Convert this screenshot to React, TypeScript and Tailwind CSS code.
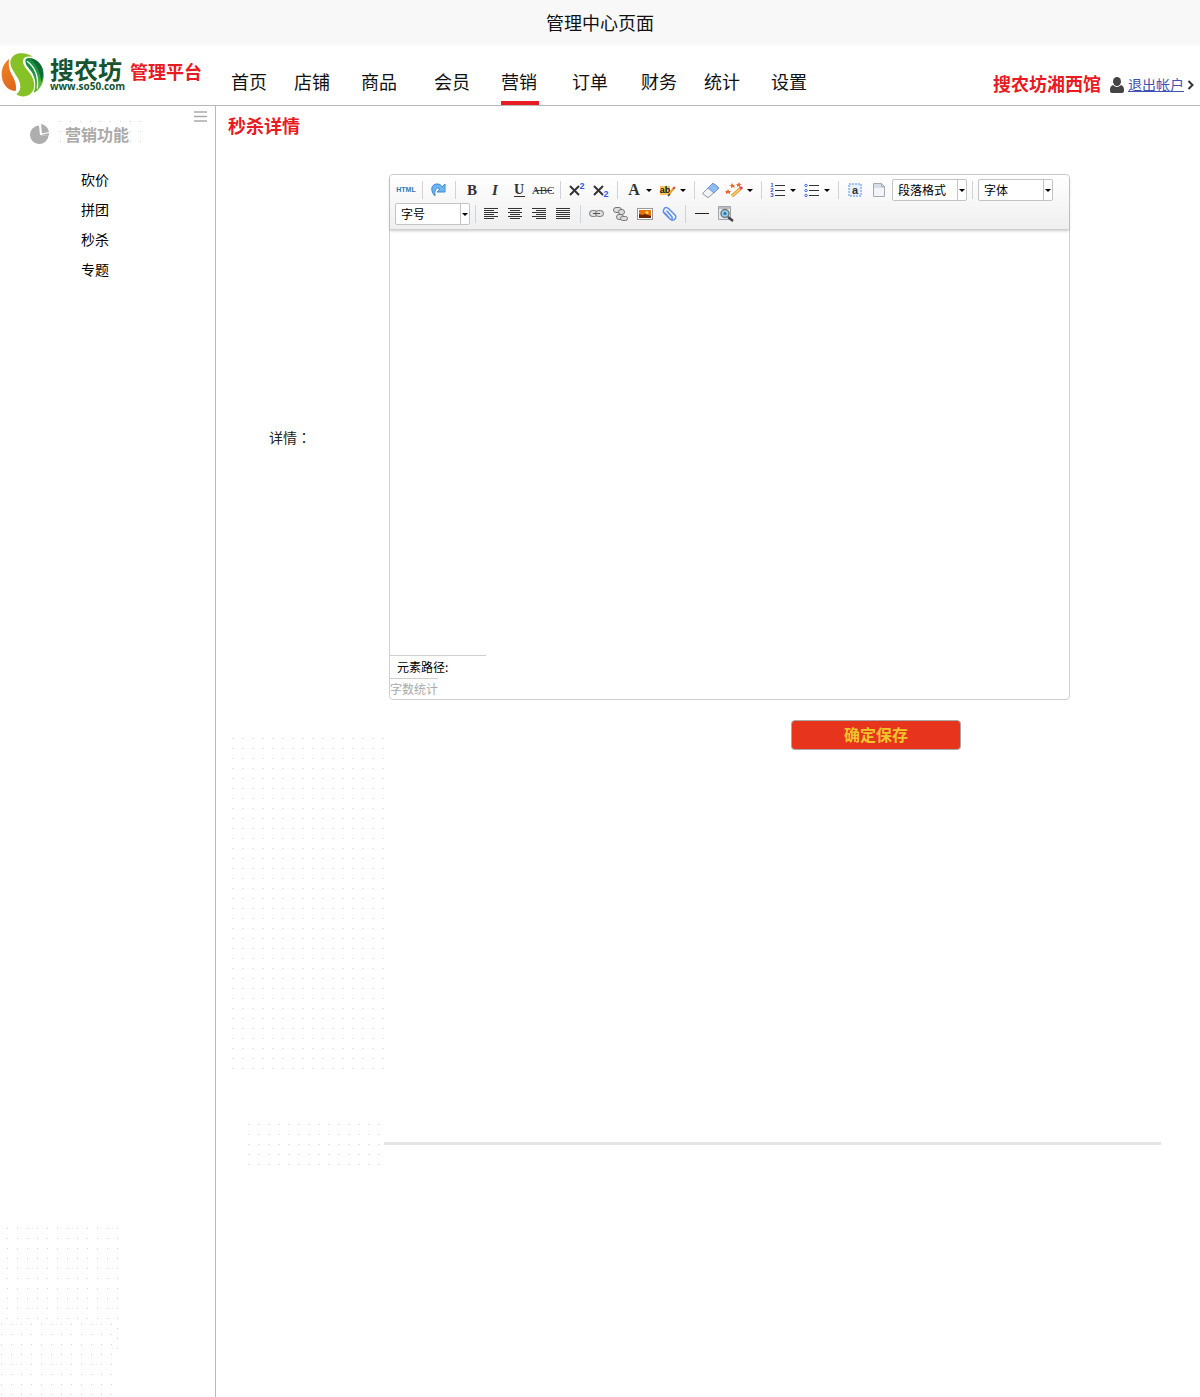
import type { ReactNode } from "react";

const navItems = [
  { label: "首页", gap: "" },
  { label: "店铺", gap: "ml-[27px]" },
  { label: "商品", gap: "ml-[31px]" },
  { label: "会员", gap: "ml-[37px]" },
  { label: "营销", gap: "ml-[31px]", active: true },
  { label: "订单", gap: "ml-[33px]" },
  { label: "财务", gap: "ml-[33px]" },
  { label: "统计", gap: "ml-[27px]" },
  { label: "设置", gap: "ml-[31px]" },
];

const sideItems = ["砍价", "拼团", "秒杀", "专题"];

function Emblem() {
  return (
    <svg viewBox="0 0 132 132" className="h-11 w-11 shrink-0" aria-hidden="true">
      <defs>
        <linearGradient id="leafOrange" x1="0" y1="0" x2="0.4" y2="1">
          <stop offset="0" stopColor="#ee8428" />
          <stop offset="1" stopColor="#e26a1a" />
        </linearGradient>
        <linearGradient id="leafDark" x1="0" y1="0" x2="0.6" y2="1">
          <stop offset="0" stopColor="#13873a" />
          <stop offset="0.6" stopColor="#1d9a40" />
          <stop offset="1" stopColor="#6dba2e" />
        </linearGradient>
      </defs>
      <path fill="url(#leafOrange)" d="M25 18C8 30-1 50 3 74c4 25 22 39 41 40 3-14 0-28-9-44C26 54 20 38 25 18Z" />
      <path fill="#86c226" d="M54 1C32 5 23 24 31 42c8 21 28 36 27 61-1 10-6 17-12 21 10 8 29 9 41 0 17-13 15-36 5-55C82 51 64 38 66 22c2-9 12-14 30-10C84 2 69-1 54 1Z" />
      <path fill="url(#leafDark)" d="M74 18c12-7 31 0 43 14 15 18 15 50 1 70-7 10-14 16-20 17 8-20 6-40-4-59C84 44 70 36 74 18Z" />
      <path fill="none" stroke="#fff" strokeWidth="4" d="M78 25c22 16 36 38 31 82" />
      <path fill="#0f6a35" d="M88 16c14 2 28 12 34 26 6 14 5 34-1 45-3-26-12-50-33-71Z" />
    </svg>
  );
}

function Tool({ label, caret, children }: { label: string; caret?: boolean; children: ReactNode }) {
  return (
    <button type="button" aria-label={label} title={label} className="flex h-6 items-center">
      <svg viewBox="0 0 24 24" className="h-6 w-6" fill="none" aria-hidden="true">
        {children}
      </svg>
      {caret && (
        <svg viewBox="0 0 10 24" className="h-6 w-[10px]" aria-hidden="true">
          <path d="M0 11h6L3 14Z" fill="#000" />
        </svg>
      )}
    </button>
  );
}

function Sep() {
  return <span className="mx-1 h-[18px] w-px self-center bg-[#d0d3d8]" />;
}

function Picker({ label, options }: { label: string; options: string[] }) {
  return (
    <label className="relative mx-px my-px block h-[22px] w-[75px]">
      <span className="sr-only">{label}</span>
      <select className="block h-[22px] w-full appearance-none rounded-[2px] border border-[#c4c4c4] bg-white pr-3 pl-[5px] text-xs leading-5 text-black outline-none">
        {[label, ...options].map((o) => (
          <option key={o}>{o}</option>
        ))}
      </select>
      <svg viewBox="0 0 10 22" className="pointer-events-none absolute right-0 top-0 h-[22px] w-[10px]" aria-hidden="true">
        <path d="M.5 1v20" stroke="#c4c4c4" />
        <path d="M2 10h6L5 13Z" fill="#000" />
      </svg>
    </label>
  );
}

const serif = "'Liberation Serif', serif";
const sans = "'Liberation Sans', sans-serif";

function Glyph({ children, x = 12, y = 17, size = 15, family = serif, weight = 700, fill = "#333", italic = false }: {
  children: string; x?: number; y?: number; size?: number; family?: string; weight?: number; fill?: string; italic?: boolean;
}) {
  return (
    <text x={x} y={y} textAnchor="middle" fontFamily={family} fontSize={size} fontWeight={weight} fill={fill} fontStyle={italic ? "italic" : "normal"}>
      {children}
    </text>
  );
}

function Toolbar() {
  return (
    <div className="flex flex-wrap rounded-t-[4px] border-b border-[#cfcfcf] bg-linear-to-b from-white to-[#efefef] px-1 pt-[3px] pb-[3px] shadow-[0_1px_3px_rgba(0,0,0,0.22)]">
      <Tool label="源代码">
        <Glyph family={sans} size={7} x={12} y={14} fill="#2f77b0">HTML</Glyph>
      </Tool>
      <Sep />
      <Tool label="重做">
        <path d="M8 18C3 13 4 6 10 6c3 0 4 1 5 3l3-3v8h-8l3-3c-2-2-6-1-5 7Z" fill="#6fb5ef" stroke="#3b8ad6" strokeWidth="1" strokeLinejoin="round" />
      </Tool>
      <Sep />
      <Tool label="加粗"><Glyph>B</Glyph></Tool>
      <Tool label="斜体"><Glyph italic x={11}>I</Glyph></Tool>
      <Tool label="下划线">
        <Glyph size={14} y={16} x={11}>U</Glyph>
        <path d="M6 18.500h11" stroke="#333" />
      </Tool>
      <Tool label="删除线">
        <Glyph size={11} x={11} y={16} weight={400}>ABC</Glyph>
        <path d="M3 12.500h17" stroke="#333" />
      </Tool>
      <Sep />
      <Tool label="上标">
        <path d="M5 8l9 9M14 8l-9 9" stroke="#333" strokeWidth="2" />
        <Glyph family={sans} size={9} x={17} y={11} fill="#2a5bf0">2</Glyph>
      </Tool>
      <Tool label="下标">
        <path d="M5 8l9 9M14 8l-9 9" stroke="#333" strokeWidth="2" />
        <Glyph family={sans} size={9} x={17} y={19} fill="#2a5bf0">2</Glyph>
      </Tool>
      <Sep />
      <Tool label="字体颜色" caret><Glyph size={16} y={17}>A</Glyph></Tool>
      <Tool label="背景色" caret>
        <path d="M4 8h10v9H4Z" fill="#fcc458" />
        <Glyph family={sans} size={9} x={9} y={15} fill="#111">ab</Glyph>
        <path d="M13 16l5-6" stroke="#f0a030" strokeWidth="2" />
        <path d="M17 11l2-2" stroke="#e54848" strokeWidth="2" />
        <path d="M12 18l2-2" stroke="#333" strokeWidth="1.500" />
      </Tool>
      <Sep />
      <Tool label="清除格式">
        <path d="M4 15l9-9q1-1 2 0l4 3q1 1 0 2l-9 8q-1 1-2 0l-4-3q-1 0 0-1Z" fill="#f0f2f5" stroke="#8e98a5" />
        <path d="M9 10l4-4q1-1 2 0l4 3q1 1 0 2l-4 4Z" fill="#8fbcf2" stroke="#6c97d0" />
      </Tool>
      <Tool label="自动排版" caret>
        <path d="M9 18l8-7" stroke="#d08325" strokeWidth="3" />
        <path d="M9 18l8-7" stroke="#ffc96a" strokeWidth="2" />
        <path d="M17 11l2-2" stroke="#e54848" strokeWidth="3" />
        <path d="M9 5l1 2h2l-1 1 1 2-2-1-2 1v-2L6 7h2ZM16 4l1 2h2l-2 1v2l-2-1-1 1v-2l-1-1h2ZM5 11l1 2h2l-1 1v2l-2-1-2 1v-2l-1-1h2Z" fill="#ed6532" />
      </Tool>
      <Sep />
      <Tool label="有序列表" caret>
        <path d="M9 7.500h10M9 12.500h10M9 17.500h10" stroke="#333" />
        <Glyph family={sans} size={6} x={6} y={9} fill="#2a5bd7">1</Glyph>
        <Glyph family={sans} size={6} x={6} y={14} fill="#2a5bd7">2</Glyph>
        <Glyph family={sans} size={6} x={6} y={19} fill="#2a5bd7">3</Glyph>
      </Tool>
      <Tool label="无序列表" caret>
        <path d="M9 7.500h10M9 12.500h10M9 17.500h10" stroke="#333" />
        <g stroke="#3b6fe0"><circle cx="6" cy="7.500" r="1.200" /><circle cx="6" cy="12.500" r="1.200" /><circle cx="6" cy="17.500" r="1.200" /></g>
      </Tool>
      <Sep />
      <Tool label="全选">
        <rect x="6" y="6" width="12" height="12" fill="#e6f0fd" stroke="#a3c4f3" strokeWidth="2" strokeDasharray="2 1" />
        <Glyph family={sans} size={11} x={12} y={16}>a</Glyph>
      </Tool>
      <Tool label="清空文档">
        <path d="M6.500 5.500h8l3 3v10h-11Z" fill="#f3f4f7" stroke="#a5a9b2" />
        <path d="M7 6h7v3h3v1H7Z" fill="#d8dce6" />
        <path d="M14.500 5.500v3h3" stroke="#a5a9b2" />
      </Tool>
      <Picker label="段落格式" options={["段落", "标题 1", "标题 2"]} />
      <Sep />
      <Picker label="字体" options={["宋体", "黑体", "楷体"]} />
      <Picker label="字号" options={["12px", "14px", "16px"]} />
      <Sep />
      <Tool label="居左对齐"><path d="M4 6.500h14M4 8.500h10M4 10.500h14M4 12.500h10M4 14.500h14M4 16.500h10" stroke="#333" /></Tool>
      <Tool label="居中对齐"><path d="M4 6.500h14M6 8.500h10M4 10.500h14M6 12.500h10M4 14.500h14M6 16.500h10" stroke="#333" /></Tool>
      <Tool label="居右对齐"><path d="M4 6.500h14M8 8.500h10M4 10.500h14M8 12.500h10M4 14.500h14M8 16.500h10" stroke="#333" /></Tool>
      <Tool label="两端对齐"><path d="M4 6.500h14M4 8.500h14M4 10.500h14M4 12.500h14M4 14.500h14M4 16.500h14" stroke="#333" /></Tool>
      <Sep />
      <Tool label="超链接">
        <g stroke="#777" strokeWidth="1"><rect x="4.500" y="8.500" width="8" height="6" rx="3" fill="#ddd" /><rect x="10.500" y="8.500" width="8" height="6" rx="3" fill="#ddd" /><path d="M8 11.500h7" stroke="#555" /></g>
      </Tool>
      <Tool label="取消链接">
        <g stroke="#777" fill="#ddd"><rect x="4.500" y="5.500" width="8" height="5" rx="2.500" /><rect x="9.500" y="7.500" width="6" height="5" rx="2.500" /><rect x="7.500" y="12.500" width="7" height="5" rx="2.500" /><rect x="11.500" y="14.500" width="7" height="4" rx="2" /></g>
      </Tool>
      <Tool label="图片">
        <rect x="4.500" y="6.500" width="15" height="11" fill="#fff" stroke="#999" />
        <rect x="6" y="8" width="12" height="8" fill="#e8730b" />
        <path d="M6 12l3 1 3-1 6 2v2H6Z" fill="#6b2506" />
        <circle cx="14" cy="10.500" r="1.500" fill="#ffd75a" />
      </Tool>
      <Tool label="附件">
        <path d="M8 11l5 6c2 2 4 1 5 0s1-3 0-4l-6-6C10 5 8 5 7 7s-1 3 0 4l6 6c1 1 3 0 2-2L10 9" stroke="#5b8fe8" strokeWidth="1.500" strokeLinecap="round" />
      </Tool>
      <Sep />
      <Tool label="分隔线"><path d="M5 11.500h14" stroke="#222" /></Tool>
      <Tool label="预览">
        <path d="M4.500 4.500h12v13h-12Z" fill="#e5e8ed" stroke="#a0a5ad" />
        <path d="M5 6h11" stroke="#b9bec8" strokeWidth="2" />
        <circle cx="11" cy="11.500" r="4" fill="#8ed0f2" stroke="#777" strokeWidth="1.500" />
        <circle cx="11" cy="11.500" r="1.500" fill="#276caa" />
        <path d="M14 15l5 4" stroke="#444" strokeWidth="2.500" />
      </Tool>
    </div>
  );
}

const dotGrid = "bg-[conic-gradient(from_270deg_at_1px_1px,#d4d4d4_90deg,transparent_0)] bg-[size:10px_10px]";
const wideDotGrid = "bg-[conic-gradient(from_270deg_at_2px_1px,#e4e4e4_90deg,transparent_0)] bg-[size:10px_10px]";

export default function App() {
  return (
    <div className="flex min-h-screen flex-col bg-white font-['Noto_Sans_CJK_SC',sans-serif] text-black">
      <div className="flex h-[45px] items-center justify-center bg-[#f8f8f8] pb-[2px] text-lg text-[#111]">管理中心页面</div>

      <header className="flex h-[61px] border-b border-[#b8b8b8]">
        <div className="flex w-[231px] shrink-0 items-start pt-2 pl-px">
          <Emblem />
          <div className="ml-[5px] w-[72px] text-[#155331]">
            <div className="mt-[3px] text-[24px] leading-[26px] font-bold">搜农坊</div>
            <div className="font-['Open_Sans'] text-[10px] leading-[9px] font-bold whitespace-nowrap">www.so50.com</div>
          </div>
          <div className="ml-2 pt-[5px] text-lg leading-[26px] font-bold text-[#e81b23]">管理平台</div>
        </div>
        <nav className="flex items-stretch text-lg text-[#111]">
          {navItems.map((n) => (
            <a
              key={n.label}
              href="#"
              aria-current={n.active ? "page" : undefined}
              className={`border-b-4 pt-[22px] leading-[28px] ${n.gap} ${n.active ? "border-[#e81b23] pr-[2px]" : "border-transparent"}`}
            >
              {n.label}
            </a>
          ))}
        </nav>
        <div className="ml-auto flex items-center pt-[18px] pr-[5px]">
          <span className="pb-[2px] text-lg font-bold text-[#e81b23]">搜农坊湘西馆</span>
          <svg viewBox="0 0 14 16" className="mt-px ml-[9px] h-4 w-[14px]" fill="#444" aria-hidden="true">
            <ellipse cx="7" cy="4.500" rx="4" ry="4.500" />
            <path d="M3 8C1 9 0 10 0 13v1q0 2 2 2h10q2 0 2-2v-1c0-3-1-4-3-5q-4 4-8 0Z" />
          </svg>
          <a href="#" className="ml-1 text-sm text-[#3f51b5] underline">退出帐户</a>
          <svg viewBox="0 0 8 10" className="mt-px ml-[3px] h-[10px] w-2" fill="none" stroke="#333" strokeWidth="2" aria-hidden="true">
            <path d="M1.500 1l4 4-4 4" />
          </svg>
        </div>
      </header>

      <div className="flex flex-1">
        <aside className="flex w-[216px] shrink-0 flex-col border-r border-[#b8b8b8]">
          <div className="flex justify-end pt-[5px] pr-2">
            <button type="button" aria-label="收起菜单">
              <svg viewBox="0 0 13 11" className="h-[11px] w-[13px]" stroke="#aaa" strokeWidth="1.500" aria-hidden="true">
                <path d="M0 1h13M0 5.500h13M0 10h13" />
              </svg>
            </button>
          </div>
          <div className="flex h-6 items-center pl-[30px]">
            <svg viewBox="0 0 20 22" className="h-[22px] w-5" fill="#aeaeae" aria-hidden="true">
              <path d="M9 2.500A9.300 9.300 0 1 0 18.500 13L10 12Z" />
              <path d="M11 1a10 10 0 0 1 8 8l-7 1.500Z" />
              <path d="M11 12l8-2q0 2-.5 3Z" />
            </svg>
            <h2 className={`ml-[10px] flex h-[26px] w-[82px] items-center pl-[5px] text-base font-bold text-[#aaa] ${dotGrid}`}>
              <span className="bg-white leading-4">营销功能</span>
            </h2>
          </div>
          <ul className="mt-[18px] pl-[81px] text-sm">
            {sideItems.map((s) => (
              <li key={s} className="h-[30px] leading-[30px]">
                <a href="#">{s}</a>
              </li>
            ))}
          </ul>
          <div aria-hidden="true" className="mt-auto">
            <div className={`ml-[7px] h-24 w-[112px] ${dotGrid}`} />
            <div className="flex pl-px">
              <div className={`h-[73px] w-[112px] ${dotGrid}`} />
              <div className={`mt-1 ml-1 h-[21px] w-px ${dotGrid}`} />
            </div>
          </div>
        </aside>

        <main className="min-w-0 flex-1">
          <h1 className="pt-[5px] pl-3 text-lg leading-7 font-bold text-[#e81b23]">秒杀详情</h1>
          <form onSubmit={(e) => e.preventDefault()}>
            <div className="mt-[35px] mr-[130px] flex items-center">
              <label htmlFor="detail" className="w-[173px] shrink-0 pl-[53px] text-sm text-[#222]">
                详情<span className="font-['Noto_Sans_CJK_TC',sans-serif]">：</span>
              </label>
              <div className="min-w-0 flex-1 rounded-[4px] border border-[#cfcfcf]">
                <Toolbar />
                <textarea id="detail" className="block h-[425px] w-full resize-none bg-transparent p-2 text-sm outline-none" />
                <div className="w-24 border-t border-[#cfcfcf] pl-[7px] text-xs leading-[22px]">元素路径:</div>
                <div className="w-12 border-t border-[#cfcfcf] text-xs leading-5 whitespace-nowrap text-[#aaa]">字数统计</div>
              </div>
            </div>
            <div className="mt-5 mr-[239px] flex justify-end">
              <button type="submit" className="h-[30px] w-[170px] rounded-[4px] border border-[#a9a9a9] bg-[#e6341d] pb-[2px] text-base leading-[26px] font-bold text-[#f0c52a]">确定保存</button>
            </div>
          </form>
          <div aria-hidden="true" className={`mt-[-12px] ml-4 h-[331px] w-[153px] ${wideDotGrid}`} />
          <div className="mt-[55px] mr-[39px] ml-8 flex items-start">
            <div aria-hidden="true" className={`h-[41px] w-[136px] ${wideDotGrid}`} />
            <hr className="mt-[18px] h-[3px] flex-1 border-0 bg-[#e6e4e7]" />
          </div>
        </main>
      </div>
    </div>
  );
}
